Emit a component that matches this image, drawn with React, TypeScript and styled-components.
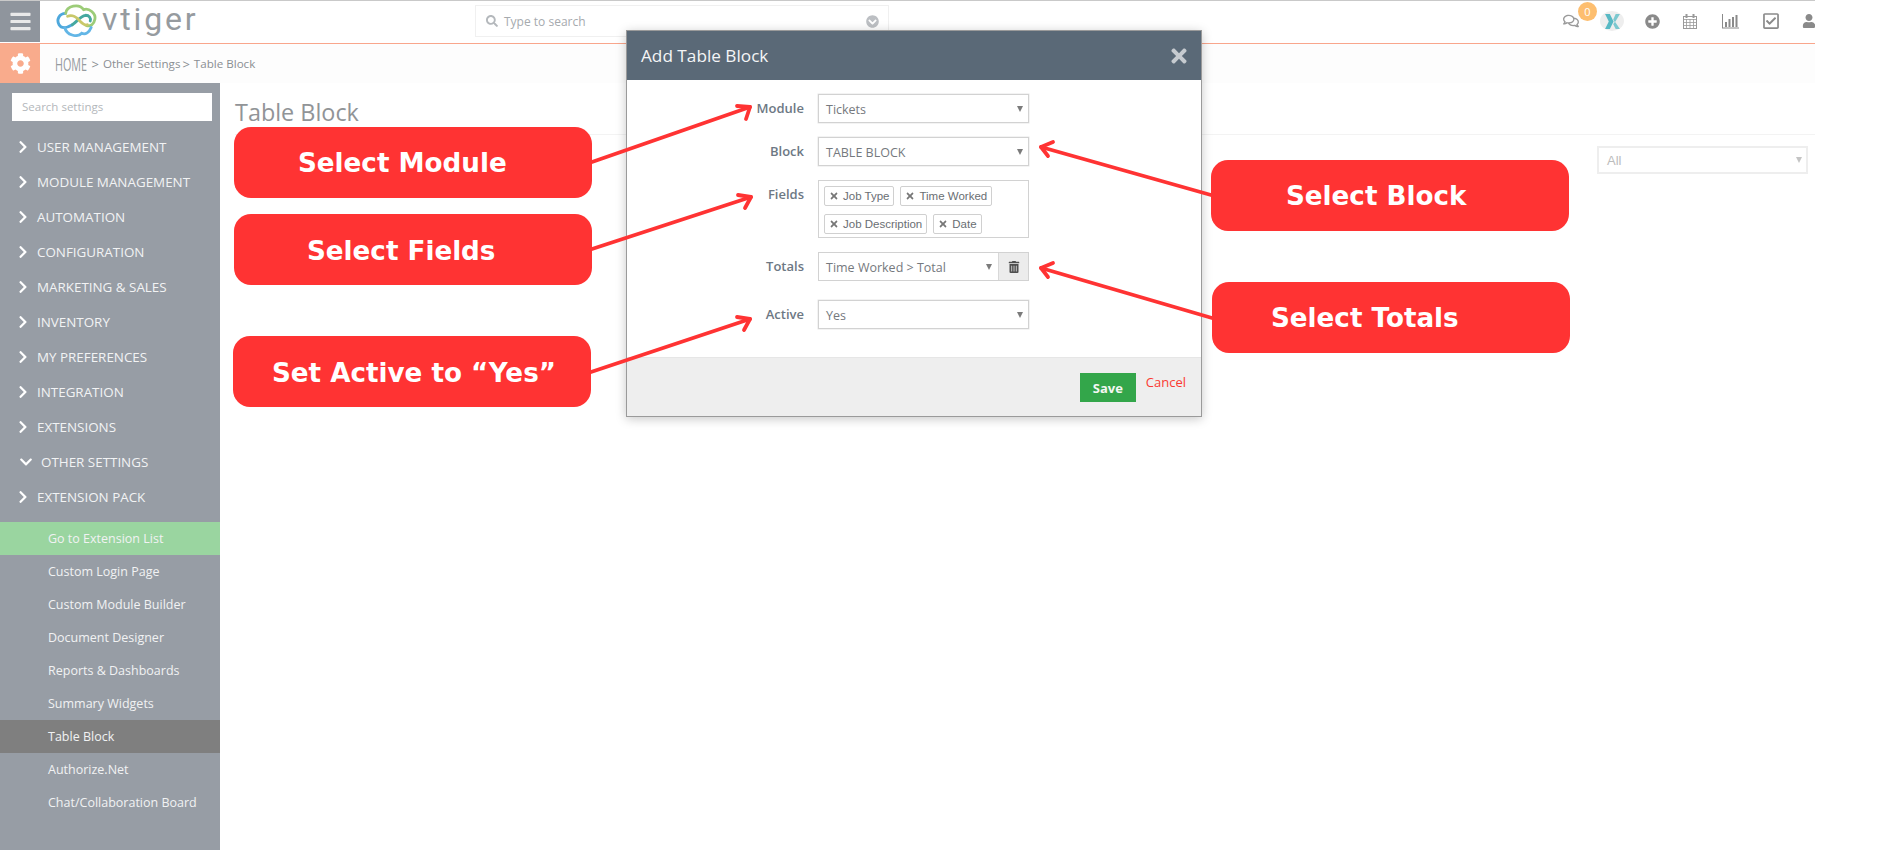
import React from "react";
import styled, { createGlobalStyle } from "styled-components";
import {
  FaBars, FaCog, FaSearch, FaChevronCircleDown, FaRegComments, FaPlusCircle,
  FaRegCheckSquare, FaUser, FaChevronRight, FaChevronDown, FaTimes, FaTrashAlt,
} from "react-icons/fa";

const Global = createGlobalStyle`
  html, body { margin: 0; padding: 0; background: #fff; overflow: hidden; }
  body { font-family: "Open Sans", "Liberation Sans", sans-serif; }
  * { box-sizing: border-box; }
`;

const Page = styled.div`
  position: relative;
  width: 1900px;
  height: 850px;
  background: #fff;
`;
const Shell = styled.div`
  width: 1815px;
  height: 850px;
  overflow: hidden;
  display: flex;
  flex-direction: column;
`;
const TopBar = styled.header`
  height: 44px;
  flex: none;
  display: flex;
  align-items: stretch;
  border-top: 1px solid #c9c9c9;
  border-bottom: 1px solid #f9a68c;
`;
const MenuButton = styled.div`
  width: 40px;
  height: 41px;
  background: #8f959d;
  color: #e9e9e9;
  display: flex;
  align-items: center;
  justify-content: center;
  font-size: 23px;
`;
const Logo = styled.div`
  display: flex;
  align-items: flex-start;
  width: 435px;
  padding-left: 16px;
  height: 42px;
  & > svg { margin-top: 2px; flex: none; }
`;
const LogoWord = styled.span`
  font-family: Roboto, "Open Sans", sans-serif;
  font-size: 32px;
  line-height: 38px;
  color: #969b9f;
  margin-left: 4px;
  margin-top: -1px;
  letter-spacing: 2.8px;
`;
const SearchBox = styled.div`
  width: 414px;
  height: 32px;
  margin-top: 4px;
  border: 1px solid #f0f0f0;
  display: flex;
  align-items: center;
  padding-left: 10px;
  color: #b4b8bc;
  font-size: 12px;
`;
const SearchText = styled.span`
  margin-left: 6px;
  flex: 1;
  color: #a6aaae;
`;
const SearchChevron = styled.span`
  display: flex;
  margin-right: 9px;
  font-size: 13px;
  color: #bcbfc3;
`;
const TopIcons = styled.div`
  margin-left: auto;
  margin-right: -1px;
  display: flex;
  align-items: center;
  height: 40px;
  color: #8a8a8a;
`;
const TopIcon = styled.span<{ $w: number; $ml?: number; $size?: number; $color?: string }>`
  position: relative;
  flex: none;
  width: ${(p) => p.$w}px;
  margin-left: ${(p) => p.$ml ?? 0}px;
  display: flex;
  justify-content: center;
  font-size: ${(p) => p.$size ?? 17}px;
  color: ${(p) => p.$color ?? "#8a8a8a"};
`;
const Badge = styled.span`
  position: absolute;
  top: -11px;
  left: 15px;
  width: 19px;
  height: 19px;
  border-radius: 50%;
  background: #fdbe6f;
  color: #fff;
  font-size: 11px;
  line-height: 19px;
  text-align: center;
`;
const XChip = styled.span`
  width: 24px;
  height: 20px;
  border-radius: 50%;
  background: #eeeeee;
  display: flex;
  align-items: center;
  justify-content: center;
`;
const CrumbBar = styled.div`
  height: 39px;
  flex: none;
  display: flex;
  align-items: center;
  background: #fdfdfd;
`;
const GearBox = styled.div`
  width: 40px;
  height: 39px;
  background: #f9ab8c;
  color: #fff;
  display: flex;
  align-items: center;
  justify-content: center;
  font-size: 21px;
`;
const Home = styled.span`
  display: inline-block;
  margin-left: 15px;
  margin-right: -19px;
  font-size: 18px;
  color: #969b9f;
  transform: scaleX(0.6);
  transform-origin: left;
`;
const CrumbSep = styled.span`
  margin: 0 4px 0 2px;
  color: #8b8f93;
  font-size: 13px;
`;
const Crumb = styled.span`
  font-size: 11.6px;
  color: #8b8f93;
`;
const Body = styled.div`
  flex: 1;
  display: flex;
  min-height: 0;
`;
const Sidebar = styled.aside`
  width: 220px;
  flex: none;
  background: #979da5;
  padding-top: 10px;
`;
const SideSearch = styled.div`
  width: 200px;
  height: 28px;
  margin-left: 12px;
  background: #fff;
  padding-left: 10px;
  font-size: 11.5px;
  line-height: 27px;
  color: #b3b7bb;
`;
const SideList = styled.nav`
  margin-top: 8px;
`;
const SideRow = styled.div<{ $open?: boolean }>`
  height: 35px;
  display: flex;
  align-items: center;
  padding-left: ${(p) => (p.$open ? 19 : 16)}px;
  gap: ${(p) => (p.$open ? 8 : 7)}px;
  color: #f2f3f4;
  font-size: 13.4px;
  & > svg { flex: none; font-size: 14px; color: #fff; }
`;
const SubList = styled.div`
  margin-top: 8px;
`;
const SubRow = styled.div<{ $tone?: "go" | "current" }>`
  height: 33px;
  display: flex;
  align-items: center;
  padding-left: 48px;
  font-size: 12.5px;
  color: #f1f2f3;
  background: ${(p) => (p.$tone === "go" ? "#9ad5a0" : p.$tone === "current" ? "#7f7f7f" : "transparent")};
`;
const Main = styled.main`
  flex: 1;
  padding: 13px 0 0 15px;
`;
const Title = styled.h1`
  margin: 0;
  font-size: 23.4px;
  line-height: 33px;
  font-weight: 400;
  color: #919497;
  height: 39px;
  border-bottom: 1px solid #f3f3f3;
`;
const FilterRow = styled.div`
  display: flex;
  justify-content: flex-end;
  padding: 11px 7px 0 0;
`;
const FilterSelect = styled.div`
  width: 211px;
  height: 28px;
  border: 2px solid #eeeeee;
  color: #bcbcbc;
  font-size: 13px;
  font-family: "Liberation Sans", sans-serif;
  display: flex;
  align-items: center;
  justify-content: space-between;
  padding: 0 4px 0 8px;
`;
const Caret = styled.i<{ $light?: boolean }>`
  display: block;
  flex: none;
  width: 0;
  height: 0;
  border-left: 3px solid transparent;
  border-right: 3px solid transparent;
  border-top: 6px solid ${(p) => (p.$light ? "#c4c4c4" : "#7b7b7b")};
`;

const Modal = styled.section`
  position: absolute;
  left: 626px;
  top: 30px;
  width: 576px;
  height: 387px;
  background: #fff;
  border: 1px solid #9a9a9a;
  box-shadow: 0 2px 10px rgba(0, 0, 0, 0.22);
  display: flex;
  flex-direction: column;
`;
const ModalHead = styled.div`
  height: 49px;
  flex: none;
  background: #5a6977;
  color: #f4f5f6;
  display: flex;
  align-items: center;
  justify-content: space-between;
  padding: 0 11px 0 14px;
  font-size: 17.2px;
`;
const CloseIcon = styled.span`
  display: flex;
  color: #c6cbd0;
  font-size: 22px;
`;
const ModalBody = styled.div`
  flex: 1;
  display: grid;
  grid-template-columns: 177px 211px;
  column-gap: 14px;
  align-content: start;
  padding: 14px 0 0 0;
`;
const FieldLabel = styled.label<{ $gap?: number }>`
  text-align: right;
  font-size: 13px;
  font-weight: 600;
  color: #6d7884;
  line-height: 28px;
  margin-bottom: ${(p) => p.$gap ?? 14}px;
`;
const Select = styled.div`
  height: 29px;
  border: 1px solid #d2d2d2;
  box-shadow: 0 0 0 0.5px #e6e6e6;
  display: flex;
  align-items: center;
  justify-content: space-between;
  padding: 1px 5px 0 7px;
  font-size: 12.5px;
  color: #75797e;
  margin-bottom: 14px;
`;
const ChipBox = styled.div`
  height: 58px;
  border: 1px solid #d2d2d2;
  padding: 5px 0 0 5px;
  display: flex;
  flex-wrap: wrap;
  align-content: flex-start;
  gap: 8px 6px;
  margin-bottom: 14px;
`;
const Chip = styled.span`
  height: 20px;
  border: 1px solid #d0d0d0;
  border-radius: 2px;
  display: inline-flex;
  align-items: center;
  padding: 0 4px 0 4px;
  gap: 4px;
  font-family: "Liberation Sans", sans-serif;
  font-size: 11.5px;
  color: #6a6e73;
  & > svg { font-size: 10px; color: #777; }
`;
const TotalsGroup = styled.div`
  height: 29px;
  border: 1px solid #d2d2d2;
  display: flex;
  margin-bottom: 19px;
`;
const TotalsSelect = styled.div`
  flex: 1;
  display: flex;
  align-items: center;
  justify-content: space-between;
  padding: 1px 6px 0 7px;
  font-size: 12.5px;
  color: #75797e;
`;
const TrashButton = styled.div`
  width: 30px;
  flex: none;
  background: #ececec;
  border-left: 1px solid #d8d8d8;
  display: flex;
  align-items: center;
  justify-content: center;
  color: #4f4f4f;
  font-size: 12px;
`;
const ModalFoot = styled.div`
  height: 59px;
  flex: none;
  background: #eeeeee;
  border-top: 1px solid #e6e6e6;
  display: flex;
  justify-content: flex-end;
  align-items: flex-start;
  gap: 10px;
  padding: 15px 15px 0 0;
`;
const SaveButton = styled.div`
  width: 56px;
  height: 29px;
  background: #33a64a;
  color: #f3f7f3;
  font-size: 13px;
  font-weight: 700;
  display: flex;
  align-items: center;
  justify-content: center;
`;
const CancelLink = styled.span`
  font-size: 13px;
  line-height: 20px;
  margin-top: -1px;
  color: #fb3a32;
`;

const Callout = styled.div<{ $x: number; $y: number; $pl: number; $pt: number }>`
  position: absolute;
  left: ${(p) => p.$x}px;
  top: ${(p) => p.$y}px;
  width: 358px;
  height: 71px;
  border-radius: 17px;
  background: #ff3333;
  color: #fff;
  font-family: "DejaVu Sans", sans-serif;
  font-weight: 700;
  font-size: 26.2px;
  display: flex;
  align-items: center;
  padding-left: ${(p) => p.$pl}px;
  padding-top: ${(p) => p.$pt}px;
  white-space: nowrap;
`;
const ArrowLayer = styled.svg`
  position: absolute;
  left: 0;
  top: 0;
  width: 1900px;
  height: 850px;
  pointer-events: none;
`;

const mainItems = [
  "USER MANAGEMENT", "MODULE MANAGEMENT", "AUTOMATION", "CONFIGURATION", "MARKETING & SALES",
  "INVENTORY", "MY PREFERENCES", "INTEGRATION", "EXTENSIONS", "OTHER SETTINGS", "EXTENSION PACK",
];
const subItems = [
  "Go to Extension List", "Custom Login Page", "Custom Module Builder", "Document Designer",
  "Reports & Dashboards", "Summary Widgets", "Table Block", "Authorize.Net", "Chat/Collaboration Board",
];
const arrows = [
  { from: [592, 162], tip: [750, 107], a: [737, 106], b: [746, 119] },
  { from: [592, 249], tip: [751, 197], a: [738, 195], b: [745, 208] },
  { from: [591, 372], tip: [750, 319], a: [737, 317], b: [744, 330] },
  { from: [1211, 195], tip: [1041, 147], a: [1053, 142], b: [1048, 156] },
  { from: [1212, 318], tip: [1041, 268], a: [1053, 263], b: [1048, 277] },
];

const LogoMark = () => (
  <svg width="42" height="34" viewBox="0 0 44 36" fill="none" strokeWidth="3" strokeLinecap="round">
    <path d="M10 11C3 11 0 18 3 23C6 28 12 26 17 23" stroke="#4ea8dc" />
    <path d="M10 11C11 3 24 0 29 7C35 5 42 11 41 17C40 23 36 25 32 24" stroke="#9ccc78" />
    <path d="M9 26C11 34 22 37 27 32C31 34 35 31 37 26" stroke="#63b6e6" />
    <path d="M17 23C22 20 25 14 31 13C35 13 37 16 36 19" stroke="#45a8a0" />
    <path d="M12 14C17 12 22 15 25 19C28 22 31 24 33 23" stroke="#c9c86a" />
  </svg>
);

const XMark = () => (
  <svg width="17" height="17" viewBox="0 0 16 16">
    <path d="M1 1h4.500l3.500 7-3.500 7H1l3.500-7z" fill="#58b9c4" />
    <path d="M15 1h-4L8.700 6 10.200 9zM15 15h-4L8.700 10.500 10.200 8z" fill="#7cc8cf" />
  </svg>
);

const CalendarIcon = () => (
  <svg width="14" height="15" viewBox="0 0 14 15" fill="none" stroke="#9a9a9a">
    <rect x="0.5" y="2.5" width="13" height="12" strokeWidth="1" />
    <path d="M0 5.500h14M3.500 5v10M7 5v10M10.500 5v10M0 8.500h14M0 11.500h14" strokeWidth="0.8" />
    <path d="M3.500 0v4M10.500 0v4" strokeWidth="2" />
  </svg>
);

const ChartIcon = () => (
  <svg width="17" height="15" viewBox="0 0 17 15" fill="#8a8a8a">
    <rect x="0" y="0" width="1" height="14" />
    <rect x="0" y="13.500" width="17" height="1" />
    <rect x="3" y="8" width="2" height="5" />
    <rect x="6.500" y="5" width="2" height="8" />
    <rect x="10" y="3" width="2" height="10" />
    <rect x="13.500" y="1" width="2" height="12" />
  </svg>
);

export default function App() {
  return (
    <Page>
      <Global />
      <Shell>
        <TopBar>
          <MenuButton><FaBars /></MenuButton>
          <Logo>
            <LogoMark />
            <LogoWord>vtiger</LogoWord>
          </Logo>
          <SearchBox>
            <FaSearch />
            <SearchText>Type to search</SearchText>
            <SearchChevron><FaChevronCircleDown /></SearchChevron>
          </SearchBox>
          <TopIcons>
            <TopIcon $w={16} $color="#9a9a9a" $size={16}>
              <FaRegComments />
              <Badge>0</Badge>
            </TopIcon>
            <TopIcon $w={24} $ml={21}><XChip><XMark /></XChip></TopIcon>
            <TopIcon $w={15} $ml={21} $size={15}><FaPlusCircle /></TopIcon>
            <TopIcon $w={14} $ml={23}><CalendarIcon /></TopIcon>
            <TopIcon $w={17} $ml={25}><ChartIcon /></TopIcon>
            <TopIcon $w={16} $ml={24} $size={18}><FaRegCheckSquare /></TopIcon>
            <TopIcon $w={14} $ml={23} $size={14}><FaUser /></TopIcon>
          </TopIcons>
        </TopBar>
        <CrumbBar>
          <GearBox><FaCog /></GearBox>
          <Home>HOME</Home>
          <CrumbSep>&gt;</CrumbSep>
          <Crumb>Other Settings</Crumb>
          <CrumbSep>&gt;</CrumbSep>
          <Crumb>Table Block</Crumb>
        </CrumbBar>
        <Body>
          <Sidebar>
            <SideSearch>Search settings</SideSearch>
            <SideList>
              {mainItems.map((item) => {
                const open = item === "OTHER SETTINGS";
                return (
                  <SideRow key={item} $open={open}>
                    {open ? <FaChevronDown /> : <FaChevronRight />}
                    {item}
                  </SideRow>
                );
              })}
            </SideList>
            <SubList>
              {subItems.map((item) => (
                <SubRow
                  key={item}
                  $tone={item === "Go to Extension List" ? "go" : item === "Table Block" ? "current" : undefined}
                >
                  {item}
                </SubRow>
              ))}
            </SubList>
          </Sidebar>
          <Main>
            <Title>Table Block</Title>
            <FilterRow>
              <FilterSelect>All<Caret $light /></FilterSelect>
            </FilterRow>
          </Main>
        </Body>
      </Shell>

      <Modal>
        <ModalHead>
          Add Table Block
          <CloseIcon><FaTimes /></CloseIcon>
        </ModalHead>
        <ModalBody>
          <FieldLabel>Module</FieldLabel>
          <Select>Tickets<Caret /></Select>
          <FieldLabel>Block</FieldLabel>
          <Select>TABLE BLOCK<Caret /></Select>
          <FieldLabel>Fields</FieldLabel>
          <ChipBox>
            <Chip><FaTimes />Job Type</Chip>
            <Chip><FaTimes />Time Worked</Chip>
            <Chip><FaTimes />Job Description</Chip>
            <Chip><FaTimes />Date</Chip>
          </ChipBox>
          <FieldLabel $gap={19}>Totals</FieldLabel>
          <TotalsGroup>
            <TotalsSelect>Time Worked &gt; Total<Caret /></TotalsSelect>
            <TrashButton><FaTrashAlt /></TrashButton>
          </TotalsGroup>
          <FieldLabel>Active</FieldLabel>
          <Select>Yes<Caret /></Select>
        </ModalBody>
        <ModalFoot>
          <SaveButton>Save</SaveButton>
          <CancelLink>Cancel</CancelLink>
        </ModalFoot>
      </Modal>

      <Callout $x={234} $y={127} $pl={64} $pt={1}>Select Module</Callout>
      <Callout $x={234} $y={214} $pl={73} $pt={3}>Select Fields</Callout>
      <Callout $x={233} $y={336} $pl={39} $pt={2}>Set Active to “Yes”</Callout>
      <Callout $x={1211} $y={160} $pl={75} $pt={1}>Select Block</Callout>
      <Callout $x={1212} $y={282} $pl={59} $pt={1}>Select Totals</Callout>

      <ArrowLayer viewBox="0 0 1900 850">
        {arrows.map((r) => (
          <g key={r.tip.join()} stroke="#ff3333" strokeWidth="3.8" fill="none" strokeLinecap="round" strokeLinejoin="round">
            <line x1={r.from[0]} y1={r.from[1]} x2={r.tip[0]} y2={r.tip[1]} />
            <polyline points={`${r.a.join(",")} ${r.tip.join(",")} ${r.b.join(",")}`} />
          </g>
        ))}
      </ArrowLayer>
    </Page>
  );
}
